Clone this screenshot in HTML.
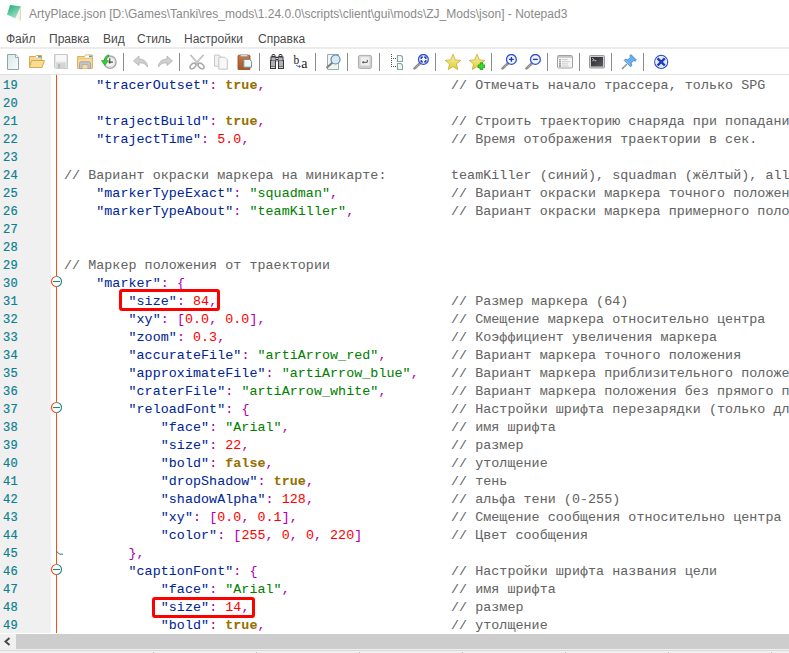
<!DOCTYPE html>
<html><head><meta charset="utf-8">
<style>
html,body{margin:0;padding:0;}
body{width:789px;height:653px;overflow:hidden;position:relative;background:#fff;font-family:"Liberation Sans",sans-serif;}
.abs{position:absolute;}
#title{position:absolute;left:29px;top:6px;letter-spacing:0.015px;font-size:12px;line-height:16px;color:#8a8a8a;white-space:pre;}
.mi{position:absolute;top:31px;font-size:12px;line-height:16px;color:#4a4a4a;white-space:pre;}
#menusep{position:absolute;left:0;top:47px;width:789px;height:2px;background:#ececec;}
#tbsep{position:absolute;left:0;top:74px;width:789px;height:1px;background:#e3e3e3;}
.ic{position:absolute;top:54px;width:16px;height:16px;}
.ic svg{display:block;width:16px;height:16px;}
.vs{position:absolute;top:53px;width:1px;height:18px;background:#8c8c8c;}
#editor{position:absolute;left:0;top:75px;width:789px;height:558px;overflow:hidden;background:#fff;}
#gutter{position:absolute;left:0;top:0;width:51px;height:558px;background:#f0f0f0;}
#nums{position:absolute;left:3px;top:2px;font-family:"Liberation Mono",monospace;font-size:12px;letter-spacing:0.3px;line-height:18px;color:#0a8090;-webkit-text-stroke:0.2px currentColor;}
.nl{height:18px;white-space:pre;}
#foldline{position:absolute;left:56px;top:0;width:1px;height:558px;background:#ff4a14;}
#code{position:absolute;left:64px;top:2px;font-family:"Liberation Mono",monospace;font-size:13.3333px;letter-spacing:0.064px;line-height:18px;-webkit-text-stroke:0.05px currentColor;color:#000;white-space:pre;}
.l{height:18px;}
.k{color:#002697;}
.o{color:#b000b0;}
.s{color:#008000;}
.n{color:#ff0000;}
.b{color:#957000;font-weight:bold;}
.c{color:#646464;}
.fold{position:absolute;left:51px;width:11px;height:11px;}
.box{position:absolute;border:3px solid #ff0000;border-radius:3px;box-sizing:border-box;}
#hscroll{position:absolute;left:0;top:634px;width:789px;height:16px;background:#f0f0f0;}
#thumb{position:absolute;left:16px;top:0;width:773px;height:15px;background:#cdcdcd;}
#whiteline{position:absolute;left:0;top:633px;width:789px;height:1px;background:#fff;}
#status{position:absolute;left:0;top:650px;width:789px;height:3px;background:#f0f0f0;border-top:1px solid #dadada;box-sizing:border-box;}
.sd{position:absolute;top:652px;width:1px;height:1px;background:#b8b8b8;}
</style></head><body>
<!-- title bar -->
<svg class="abs" style="left:7px;top:5px" width="15" height="16" viewBox="0 0 15 16">
  <defs><linearGradient id="np" x1="0" y1="0" x2="0.7" y2="1"><stop offset="0" stop-color="#10ad78"/><stop offset="1" stop-color="#b2e2cc"/></linearGradient></defs>
  <path d="M13.2 1.2 L13.6 15.6 L12.6 15.6 L8.6 13.6 Z" fill="#f4f4f4"/>
  <path d="M13.4 1.5 V15.6" stroke="#e8c47a" stroke-width="0.7"/>
  <path d="M3.1 0 L13.8 1.2 L8.2 13.6 L0 9.6 Z" fill="url(#np)"/>
</svg>
<div id="title">ArtyPlace.json [D:\Games\Tanki\res_mods\1.24.0.0\scripts\client\gui\mods\ZJ_Mods\json] - Notepad3</div>
<div class="mi" style="left:6px">Файл</div>
<div class="mi" style="left:49px">Правка</div>
<div class="mi" style="left:103px">Вид</div>
<div class="mi" style="left:137px">Стиль</div>
<div class="mi" style="left:184px">Настройки</div>
<div class="mi" style="left:258px">Справка</div>
<div id="menusep"></div>
<!-- toolbar -->
<div class="ic" style="left:5px"><svg viewBox="0 0 16 16" width="16" height="16"><defs><linearGradient id="gnew" x1="0" y1="0" x2="1" y2="1"><stop offset="0" stop-color="#d6e6e8"/><stop offset="1" stop-color="#fafcfc"/></linearGradient></defs>
<path d="M2.5 0.5 H10.8 L13.5 3.2 V15.5 H2.5 Z" fill="url(#gnew)" stroke="#94a4a6" stroke-width="1"/>
<path d="M10.5 0.8 V3.5 H13.2" fill="#ffffff" stroke="#94a4a6" stroke-width="0.9"/></svg></div>
<div class="ic" style="left:29px"><svg viewBox="0 0 16 16" width="16" height="16"><path d="M0.5 2.5 H6.5 L7.5 1.5 H12.5 V13.5 H0.5 Z" fill="#f6d898" stroke="#d8aa50" stroke-width="1"/>
<rect x="9" y="2" width="3" height="1.4" fill="#38a4e4"/>
<rect x="7" y="2" width="2" height="1.4" fill="#ffffff"/>
<path d="M2.6 6.5 H15.5 L13 13.5 H0.5 Z" fill="#f8dc92" stroke="#d8aa50" stroke-width="1"/></svg></div>
<div class="ic" style="left:53px"><svg viewBox="0 0 16 16" width="16" height="16"><path d="M1.5 0.5 H14.5 V14.5 H2.5 L1.5 13.5 Z" fill="#e4e4e4" stroke="#c8c8c8" stroke-width="1"/>
<rect x="3" y="1" width="10" height="6.5" fill="#f8f8f8"/>
<rect x="3.5" y="9" width="9" height="5.5" fill="#d4d4d4"/>
<rect x="5" y="10" width="2" height="4" fill="#b8b8b8"/></svg></div>
<div class="ic" style="left:77px"><svg viewBox="0 0 16 16" width="16" height="16"><path d="M0.6 2.5 H7.5 L8.5 1 H15.4 V14.4 H0.6 Z" fill="#f6dc9c" stroke="#dcae58" stroke-width="1"/>
<path d="M8.6 1.6 H15 V3.4 H8 Z" fill="#ffffff"/>
<rect x="12" y="1.6" width="2.8" height="1.6" fill="#30a8e8"/>
<path d="M0.6 4.5 H15.4" stroke="#e8c070" stroke-width="0.8"/>
<path d="M2.5 14.6 V9.5 Q2.5 7.8 4.2 7.8 H11.8 Q13.5 7.8 13.5 9.5 V14.6 H10.8 V10.6 H5.2 V14.6 Z" fill="#c4c4cc" stroke="#9a9aa4" stroke-width="0.8"/>
<rect x="5.6" y="10.8" width="4.8" height="3.6" fill="#f6dc9c"/></svg></div>
<div class="ic" style="left:101px"><svg viewBox="0 0 16 16" width="16" height="16"><circle cx="9" cy="8.1" r="6.1" fill="#f2f6f6" stroke="#a8a8a8" stroke-width="1.4"/>
<circle cx="9" cy="8.1" r="4.6" fill="none" stroke="#d8d8e0" stroke-width="0.8"/>
<path d="M8.8 4.2 V9.6 M7.4 8.1 H12" stroke="#2a2a2a" stroke-width="1"/>
<path d="M7.8 0.8 C5 1.2 3.6 3.5 3.4 6.6 L0.3 6.6 L3.9 11.2 L7.4 6.6 L5.3 6.6 C5.5 4.5 6.2 3.2 8 2.6 Z" fill="#30d030" stroke="#1e9a1e" stroke-width="0.6" stroke-linejoin="round"/></svg></div>
<div class="ic" style="left:133px"><svg viewBox="0 0 16 16" width="16" height="16"><path d="M6 2 L0.5 7 L6 11.5 V9 C9.5 8.5 12.5 9.5 14.5 13 C14.5 8.5 11.5 5.2 6 5 Z" fill="#cfcfcf" stroke="#b0b0b0" stroke-width="0.8"/></svg></div>
<div class="ic" style="left:157px"><svg viewBox="0 0 16 16" width="16" height="16"><path d="M10 2 L15.5 7 L10 11.5 V9 C6.5 8.5 3.5 9.5 1.5 13 C1.5 8.5 4.5 5.2 10 5 Z" fill="#cfcfcf" stroke="#b0b0b0" stroke-width="0.8"/></svg></div>
<div class="ic" style="left:189px"><svg viewBox="0 0 16 16" width="16" height="16"><path d="M1.5 1 L10 10.5 M14.5 1 L6 10.5" stroke="#b4b4b4" stroke-width="1.8"/>
<path d="M2 1.5 L9.5 10 M14 1.5 L6.5 10" stroke="#e6e6e6" stroke-width="0.5"/>
<ellipse cx="4" cy="12" rx="3.4" ry="2.2" transform="rotate(-40 4 12)" fill="none" stroke="#a8a8a8" stroke-width="1.5"/>
<ellipse cx="12" cy="12" rx="3.4" ry="2.2" transform="rotate(40 12 12)" fill="none" stroke="#a8a8a8" stroke-width="1.5"/></svg></div>
<div class="ic" style="left:213px"><svg viewBox="0 0 16 16" width="16" height="16"><path d="M1.5 1.1 H6.3 L8.3 3.1 V12.2 H1.5 Z" fill="#f2f2f2" stroke="#c8c8c8" stroke-width="1"/>
<path d="M5.8 3.2 H11.8 L14.3 5.7 V15.2 H5.8 Z" fill="#f8f8f8" stroke="#c4c4c4" stroke-width="1"/></svg></div>
<div class="ic" style="left:237px"><svg viewBox="0 0 16 16" width="16" height="16"><defs><linearGradient id="gpa" x1="0" y1="0" x2="0" y2="1"><stop offset="0" stop-color="#c87a44"/><stop offset="1" stop-color="#a85424"/></linearGradient></defs>
<rect x="1" y="1.2" width="12" height="14.5" rx="0.8" fill="url(#gpa)" stroke="#8e4a22" stroke-width="0.8"/>
<rect x="3.5" y="0.2" width="7" height="2.4" rx="0.8" fill="#dcdcdc" stroke="#9a9a9a" stroke-width="0.6"/>
<path d="M6.8 5.4 H12.6 L14.6 7.4 V13.2 H6.8 Z" fill="#f0f6f6" stroke="#6a9494" stroke-width="1"/></svg></div>
<div class="ic" style="left:269px"><svg viewBox="0 0 16 16" width="16" height="16"><g fill="#363636">
<rect x="2.5" y="0" width="4" height="4" rx="1.8"/>
<rect x="9.5" y="0" width="4" height="4" rx="1.8"/>
<rect x="1.5" y="2.5" width="6" height="5"/>
<rect x="8.5" y="2.5" width="6" height="5"/>
<rect x="7" y="3" width="2" height="3"/>
<rect x="1" y="6" width="6" height="9"/>
<rect x="9" y="6" width="6" height="9"/>
</g>
<rect x="3.5" y="1" width="2" height="1" fill="#e8e8e8"/>
<rect x="10.5" y="1" width="2" height="1" fill="#e8e8e8"/>
<rect x="2.5" y="3.5" width="4" height="3" fill="#b8b8bc"/>
<rect x="9.5" y="3.5" width="4" height="3" fill="#b8b8bc"/>
<rect x="7" y="4" width="2" height="1" fill="#d0d0d0"/>
<rect x="2" y="7" width="4" height="5.5" fill="#b0b0b6"/>
<rect x="10" y="7" width="4" height="5.5" fill="#b0b0b6"/>
<rect x="2" y="13" width="4" height="1" fill="#d4d4d4"/>
<rect x="10" y="13" width="4" height="1" fill="#d4d4d4"/></svg></div>
<div class="ic" style="left:293px"><svg viewBox="0 0 16 16" width="16" height="16"><text x="0.6" y="9.8" font-family="Liberation Serif" font-size="11.5" fill="#1a1a1a">b</text>
<text x="8.3" y="13.9" font-family="Liberation Serif" font-size="14" fill="#1a1a1a">a</text>
<path d="M3.2 11.2 Q4 12.4 6.5 12.4" fill="none" stroke="#2a5ae0" stroke-width="1"/>
<path d="M6 10.9 L8 12.4 L6 13.9 Z" fill="#2a5ae0"/></svg></div>
<div class="ic" style="left:325px"><svg viewBox="0 0 16 16" width="16" height="16"><path d="M2.5 0.5 H13.5 V15.5 H2.5 Z" fill="#f0f4f4" stroke="#9ab0b0" stroke-width="1"/>
<circle cx="10.5" cy="5.5" r="4.5" fill="#d6eaf6" stroke="#6a8aa0" stroke-width="1.2"/>
<path d="M7.5 8.5 L1.5 14" stroke="#808080" stroke-width="2"/></svg></div>
<div class="ic" style="left:357px"><svg viewBox="0 0 16 16" width="16" height="16"><rect x="1.4" y="1.4" width="13.2" height="13" rx="1.6" fill="#cfcfcf" stroke="#a8a8a8" stroke-width="0.9"/>
<path d="M2.5 2.5 H13.5 L12 4 H4 Z" fill="#e4e4e4"/>
<rect x="3.6" y="3.6" width="8.8" height="8" rx="0.6" fill="#f0f0f0"/>
<path d="M10.3 5.8 V8.3 H6" fill="none" stroke="#555" stroke-width="1"/>
<path d="M6.6 6.8 L4.8 8.3 L6.6 9.8 Z" fill="#555"/></svg></div>
<div class="ic" style="left:389px"><svg viewBox="0 0 16 16" width="16" height="16"><g fill="#505050"><rect x="2" y="0" width="1" height="1"/><rect x="2" y="2" width="1" height="1"/><rect x="2" y="4" width="1" height="1"/><rect x="2" y="6" width="1" height="1"/><rect x="2" y="8" width="1" height="1"/><rect x="2" y="10" width="1" height="1"/><rect x="2" y="12" width="1" height="1"/>
<rect x="4" y="4" width="1" height="1"/><rect x="6" y="4" width="1" height="1"/><rect x="4" y="12" width="1" height="1"/><rect x="6" y="12" width="1" height="1"/></g>
<path d="M8.5 1.5 H12 L13.5 3 V7.5 H8.5 Z" fill="#eef8f8" stroke="#88a4a4" stroke-width="1.1"/>
<path d="M8.5 9.5 H12 L13.5 11 V15.5 H8.5 Z" fill="#eef8f8" stroke="#88a4a4" stroke-width="1.1"/></svg></div>
<div class="ic" style="left:413px"><svg viewBox="0 0 16 16" width="16" height="16"><path d="M7 9.3 L1.6 14.4" stroke="#8c8c8c" stroke-width="2.6" stroke-linecap="round"/><path d="M6.5 9.8 L2 14" stroke="#c8c8c8" stroke-width="0.8" stroke-dasharray="1 1"/>
<circle cx="10.4" cy="5.4" r="4.9" fill="#f0f5fb" stroke="#2f4fd0" stroke-width="1.3"/>
<path d="M8.2 5 V3.2 H10 M11 3.2 H12.8 V5 M12.8 6 V7.8 H11 M10 7.8 H8.2 V6" fill="none" stroke="#1a34b0" stroke-width="1.3"/></svg></div>
<div class="ic" style="left:445px"><svg viewBox="0 0 16 16" width="16" height="16"><defs><linearGradient id="gst" x1="0" y1="0" x2="0" y2="1"><stop offset="0" stop-color="#f6f0a8"/><stop offset="0.5" stop-color="#ede070"/><stop offset="1" stop-color="#e0cc30"/></linearGradient></defs>
<path d="M8 0.3 L10.4 5.9 L15.8 6.4 L11.4 10 L12.8 15.6 L8 12.6 L3.2 15.6 L4.6 10 L0.2 6.4 L5.6 5.9 Z" fill="url(#gst)" stroke="#c4ac30" stroke-width="0.8" stroke-linejoin="round"/></svg></div>
<div class="ic" style="left:469px"><svg viewBox="0 0 16 16" width="16" height="16"><path d="M8 0.3 L10.4 5.9 L15.8 6.4 L11.4 10 L12.8 15.6 L8 12.6 L3.2 15.6 L4.6 10 L0.2 6.4 L5.6 5.9 Z" fill="url(#gst)" stroke="#c4ac30" stroke-width="0.8" stroke-linejoin="round"/>
<path d="M11.2 8.8 H13.8 V11 H16 V13.6 H13.8 V15.8 H11.2 V13.6 H9 V11 H11.2 Z" fill="#3ad83a" stroke="#12a012" stroke-width="0.8"/></svg></div>
<div class="ic" style="left:501px"><svg viewBox="0 0 16 16" width="16" height="16"><path d="M7 9.3 L1.6 14.4" stroke="#8c8c8c" stroke-width="2.6" stroke-linecap="round"/><path d="M6.5 9.8 L2 14" stroke="#c8c8c8" stroke-width="0.8" stroke-dasharray="1 1"/>
<circle cx="10.4" cy="5.4" r="4.9" fill="#f0f5fb" stroke="#2f4fd0" stroke-width="1.3"/>
<path d="M8 5.4 H12.8 M10.4 3 V7.8" stroke="#1e38b0" stroke-width="1.3"/></svg></div>
<div class="ic" style="left:525px"><svg viewBox="0 0 16 16" width="16" height="16"><path d="M7 9.3 L1.6 14.4" stroke="#8c8c8c" stroke-width="2.6" stroke-linecap="round"/><path d="M6.5 9.8 L2 14" stroke="#c8c8c8" stroke-width="0.8" stroke-dasharray="1 1"/>
<circle cx="10.4" cy="5.4" r="4.9" fill="#f0f5fb" stroke="#2f4fd0" stroke-width="1.3"/>
<path d="M8 5.4 H12.8" stroke="#1e38b0" stroke-width="1.3"/></svg></div>
<div class="ic" style="left:557px"><svg viewBox="0 0 16 16" width="16" height="16"><rect x="0.5" y="1.5" width="15" height="12.5" rx="1" fill="#f6f6f6" stroke="#a0a0a0" stroke-width="1"/>
<rect x="1" y="2" width="14" height="1.8" fill="#c4c4c4"/>
<circle cx="3" cy="5.7" r="0.8" fill="#30b030"/><rect x="4.8" y="5.3" width="6" height="0.8" fill="#c0c0c0"/>
<circle cx="3" cy="7.8" r="0.8" fill="#e04040"/><rect x="4.8" y="7.4" width="8" height="0.8" fill="#c0c0c0"/>
<circle cx="3" cy="9.9" r="0.8" fill="#3070e0"/><rect x="4.8" y="9.5" width="6" height="0.8" fill="#c0c0c0"/>
<circle cx="3" cy="12" r="0.8" fill="#404040"/><rect x="4.8" y="11.6" width="7" height="0.8" fill="#c0c0c0"/></svg></div>
<div class="ic" style="left:589px"><svg viewBox="0 0 16 16" width="16" height="16"><defs><linearGradient id="gco" x1="0" y1="0" x2="1" y2="1"><stop offset="0" stop-color="#2a2a2a"/><stop offset="1" stop-color="#585860"/></linearGradient></defs>
<rect x="0.5" y="1.5" width="15" height="12.5" rx="0.8" fill="#cfcfcf" stroke="#9a9a9a" stroke-width="1"/>
<rect x="2" y="3" width="12" height="9.5" fill="url(#gco)"/>
<path d="M3.2 4.2 L5.2 5.6 L3.2 7" fill="none" stroke="#e8e8e8" stroke-width="0.8"/>
<rect x="5.4" y="6.4" width="2" height="0.8" fill="#e8e8e8"/></svg></div>
<div class="ic" style="left:621px"><svg viewBox="0 0 16 16" width="16" height="16"><path d="M1 15 L5.8 10.2" stroke="#808080" stroke-width="1.4"/>
<path d="M1.6 14.4 L5.4 10.6" stroke="#d0d0d0" stroke-width="0.5" stroke-dasharray="1 1"/>
<path d="M10 0.6 L15.4 6 L14.2 7.2 L12.6 6.6 L10.2 9.2 L10.9 11.6 L9.6 12.8 L3.2 6.4 L4.4 5.1 L6.8 5.8 L9.4 3.4 L8.8 1.8 Z" fill="#68aee8" stroke="#3a7cc4" stroke-width="0.7" stroke-linejoin="round"/>
<path d="M5 6.5 L9.6 11" stroke="#a8d4f6" stroke-width="0.7"/></svg></div>
<div class="ic" style="left:653px"><svg viewBox="0 0 16 16" width="16" height="16"><circle cx="8.2" cy="7.9" r="6.5" fill="#e6e8ee" stroke="#2f50d8" stroke-width="1.2"/>
<circle cx="8.2" cy="7.9" r="5.4" fill="none" stroke="#f6f6f8" stroke-width="0.8"/>
<path d="M4.6 4.3 L11.8 11.5 M11.8 4.3 L4.6 11.5" stroke="#1c3cc0" stroke-width="2.4"/></svg></div>
<div class="vs" style="left:123px"></div>
<div class="vs" style="left:179px"></div>
<div class="vs" style="left:259px"></div>
<div class="vs" style="left:315px"></div>
<div class="vs" style="left:347px"></div>
<div class="vs" style="left:379px"></div>
<div class="vs" style="left:435px"></div>
<div class="vs" style="left:491px"></div>
<div class="vs" style="left:547px"></div>
<div class="vs" style="left:579px"></div>
<div class="vs" style="left:611px"></div>
<div class="vs" style="left:643px"></div>
<div id="tbsep"></div>
<div id="editor">
  <div id="gutter"></div>
  <div id="nums"><div class="nl">19</div><div class="nl">20</div><div class="nl">21</div><div class="nl">22</div><div class="nl">23</div><div class="nl">24</div><div class="nl">25</div><div class="nl">26</div><div class="nl">27</div><div class="nl">28</div><div class="nl">29</div><div class="nl">30</div><div class="nl">31</div><div class="nl">32</div><div class="nl">33</div><div class="nl">34</div><div class="nl">35</div><div class="nl">36</div><div class="nl">37</div><div class="nl">38</div><div class="nl">39</div><div class="nl">40</div><div class="nl">41</div><div class="nl">42</div><div class="nl">43</div><div class="nl">44</div><div class="nl">45</div><div class="nl">46</div><div class="nl">47</div><div class="nl">48</div><div class="nl">49</div></div>
  <div id="foldline"></div>
  <svg class="abs" style="left:51px;top:198px" width="12" height="18" viewBox="0 0 12 18"><circle cx="5.5" cy="8.5" r="5" fill="#fff"/><path d="M5.5 3.5 A5 5 0 0 0 5.5 13.5" fill="#fff" stroke="#ff4a14" stroke-width="1.1"/><path d="M5.5 3.5 A5 5 0 0 1 5.5 13.5" fill="#fff" stroke="#1f8585" stroke-width="1.1"/><path d="M2 8.5 H9" stroke="#1f8585" stroke-width="1.1"/></svg>
<svg class="abs" style="left:51px;top:324px" width="12" height="18" viewBox="0 0 12 18"><circle cx="5.5" cy="8.5" r="5" fill="#fff"/><path d="M5.5 3.5 A5 5 0 0 0 5.5 13.5" fill="#fff" stroke="#ff4a14" stroke-width="1.1"/><path d="M5.5 3.5 A5 5 0 0 1 5.5 13.5" fill="#fff" stroke="#1f8585" stroke-width="1.1"/><path d="M2 8.5 H9" stroke="#1f8585" stroke-width="1.1"/></svg>
<svg class="abs" style="left:51px;top:486px" width="12" height="18" viewBox="0 0 12 18"><circle cx="5.5" cy="8.5" r="5" fill="#fff"/><path d="M5.5 3.5 A5 5 0 0 0 5.5 13.5" fill="#fff" stroke="#ff4a14" stroke-width="1.1"/><path d="M5.5 3.5 A5 5 0 0 1 5.5 13.5" fill="#fff" stroke="#1f8585" stroke-width="1.1"/><path d="M2 8.5 H9" stroke="#1f8585" stroke-width="1.1"/></svg>
<svg class="abs" style="left:51px;top:468px" width="12" height="18" viewBox="0 0 12 18"><path d="M5.5 8 Q7.5 11 9 11.2 H12" fill="none" stroke="#1f8585" stroke-width="1"/></svg>
  <div id="code"><div class="l">    <span class="k">&quot;tracerOutset&quot;</span><span class="o">:</span> <span class="b">true</span><span class="o">,</span>                       <span class="c">// Отмечать начало трассера, только SPG</span></div><div class="l"></div><div class="l">    <span class="k">&quot;trajectBuild&quot;</span><span class="o">:</span> <span class="b">true</span><span class="o">,</span>                       <span class="c">// Строить траекторию снаряда при попадании</span></div><div class="l">    <span class="k">&quot;trajectTime&quot;</span><span class="o">:</span> <span class="n">5.0</span><span class="o">,</span>                         <span class="c">// Время отображения траектории в сек.</span></div><div class="l"></div><div class="l"><span class="c">// Вариант окраски маркера на миникарте:        teamKiller (синий), squadman (жёлтый), all</span></div><div class="l">    <span class="k">&quot;markerTypeExact&quot;</span><span class="o">:</span> <span class="s">&quot;squadman&quot;</span><span class="o">,</span>              <span class="c">// Вариант окраски маркера точного положения</span></div><div class="l">    <span class="k">&quot;markerTypeAbout&quot;</span><span class="o">:</span> <span class="s">&quot;teamKiller&quot;</span><span class="o">,</span>            <span class="c">// Вариант окраски маркера примерного положения</span></div><div class="l"></div><div class="l"></div><div class="l"><span class="c">// Маркер положения от траектории</span></div><div class="l">    <span class="k">&quot;marker&quot;</span><span class="o">:</span> <span class="o">{</span></div><div class="l">        <span class="k">&quot;size&quot;</span><span class="o">:</span> <span class="n">84</span><span class="o">,</span>                             <span class="c">// Размер маркера (64)</span></div><div class="l">        <span class="k">&quot;xy&quot;</span><span class="o">:</span> <span class="o">[</span><span class="n">0.0</span><span class="o">,</span> <span class="n">0.0</span><span class="o">],</span>                       <span class="c">// Смещение маркера относительно центра</span></div><div class="l">        <span class="k">&quot;zoom&quot;</span><span class="o">:</span> <span class="n">0.3</span><span class="o">,</span>                            <span class="c">// Коэффициент увеличения маркера</span></div><div class="l">        <span class="k">&quot;accurateFile&quot;</span><span class="o">:</span> <span class="s">&quot;artiArrow_red&quot;</span><span class="o">,</span>        <span class="c">// Вариант маркера точного положения</span></div><div class="l">        <span class="k">&quot;approximateFile&quot;</span><span class="o">:</span> <span class="s">&quot;artiArrow_blue&quot;</span><span class="o">,</span>    <span class="c">// Вариант маркера приблизительного положения</span></div><div class="l">        <span class="k">&quot;craterFile&quot;</span><span class="o">:</span> <span class="s">&quot;artiArrow_white&quot;</span><span class="o">,</span>        <span class="c">// Вариант маркера положения без прямого попадания</span></div><div class="l">        <span class="k">&quot;reloadFont&quot;</span><span class="o">:</span> <span class="o">{</span>                         <span class="c">// Настройки шрифта перезарядки (только для арты)</span></div><div class="l">            <span class="k">&quot;face&quot;</span><span class="o">:</span> <span class="s">&quot;Arial&quot;</span><span class="o">,</span>                    <span class="c">// имя шрифта</span></div><div class="l">            <span class="k">&quot;size&quot;</span><span class="o">:</span> <span class="n">22</span><span class="o">,</span>                         <span class="c">// размер</span></div><div class="l">            <span class="k">&quot;bold&quot;</span><span class="o">:</span> <span class="b">false</span><span class="o">,</span>                      <span class="c">// утолщение</span></div><div class="l">            <span class="k">&quot;dropShadow&quot;</span><span class="o">:</span> <span class="b">true</span><span class="o">,</span>                 <span class="c">// тень</span></div><div class="l">            <span class="k">&quot;shadowAlpha&quot;</span><span class="o">:</span> <span class="n">128</span><span class="o">,</span>                 <span class="c">// альфа тени (0-255)</span></div><div class="l">            <span class="k">&quot;xy&quot;</span><span class="o">:</span> <span class="o">[</span><span class="n">0.0</span><span class="o">,</span> <span class="n">0.1</span><span class="o">],</span>                   <span class="c">// Смещение сообщения относительно центра</span></div><div class="l">            <span class="k">&quot;color&quot;</span><span class="o">:</span> <span class="o">[</span><span class="n">255</span><span class="o">,</span> <span class="n">0</span><span class="o">,</span> <span class="n">0</span><span class="o">,</span> <span class="n">220</span><span class="o">]</span>           <span class="c">// Цвет сообщения</span></div><div class="l">        <span class="o">},</span></div><div class="l">        <span class="k">&quot;captionFont&quot;</span><span class="o">:</span> <span class="o">{</span>                        <span class="c">// Настройки шрифта названия цели</span></div><div class="l">            <span class="k">&quot;face&quot;</span><span class="o">:</span> <span class="s">&quot;Arial&quot;</span><span class="o">,</span>                    <span class="c">// имя шрифта</span></div><div class="l">            <span class="k">&quot;size&quot;</span><span class="o">:</span> <span class="n">14</span><span class="o">,</span>                         <span class="c">// размер</span></div><div class="l">            <span class="k">&quot;bold&quot;</span><span class="o">:</span> <span class="b">true</span><span class="o">,</span>                       <span class="c">// утолщение</span></div></div>
</div>
<div class="box" style="left:119px;top:289px;width:101px;height:22px"></div>
<div class="box" style="left:152px;top:597px;width:103px;height:21px"></div>
<div id="whiteline"></div>
<div id="hscroll"><svg class="abs" style="left:3px;top:3px" width="8" height="9" viewBox="0 0 8 9"><path d="M6.5 1 L2.5 4.5 L6.5 8" fill="none" stroke="#4a4a4a" stroke-width="2"/></svg><div id="thumb"></div></div>
<div id="status"></div>
<div class="sd" style="left:153px"></div><div class="sd" style="left:256px"></div><div class="sd" style="left:359px"></div><div class="sd" style="left:462px"></div><div class="sd" style="left:565px"></div><div class="sd" style="left:668px"></div><div class="sd" style="left:771px"></div>
</body></html>
